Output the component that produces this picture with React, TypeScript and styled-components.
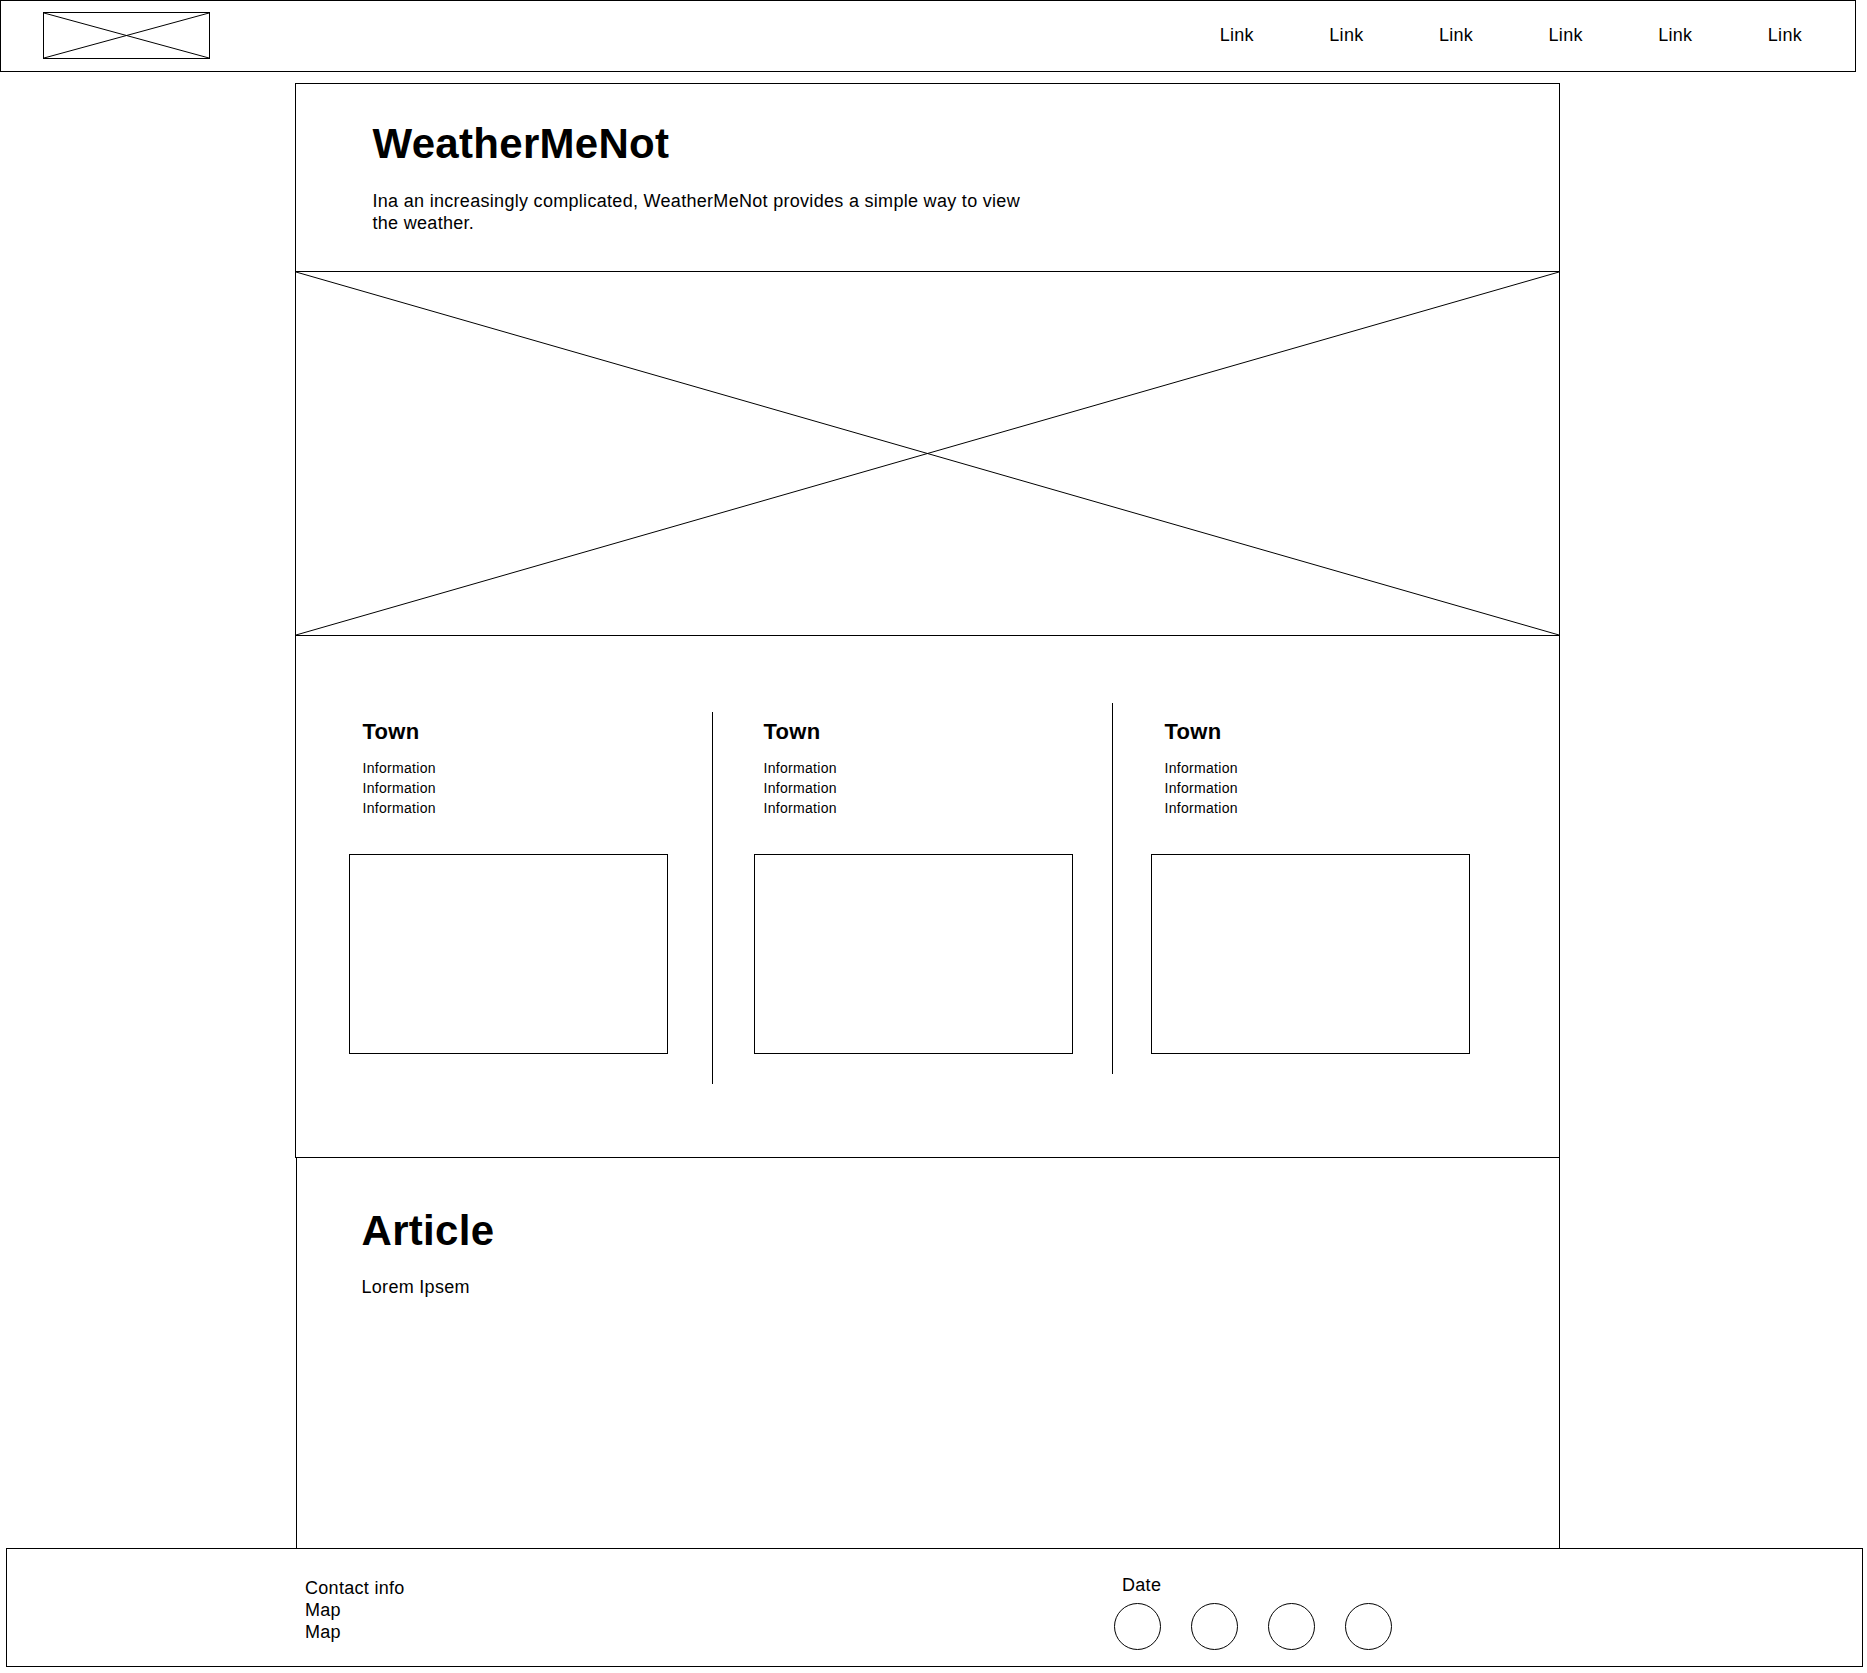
import React from "react";
import styled, { createGlobalStyle } from "styled-components";

const GlobalStyle = createGlobalStyle`
  html, body {
    margin: 0;
    padding: 0;
    background: #ffffff;
  }
  body {
    font-family: "Liberation Sans", Arial, Helvetica, sans-serif;
    color: #000000;
    letter-spacing: 0.3px;
  }
  *, *::before, *::after {
    box-sizing: border-box;
  }
`;

const Page = styled.div`
  width: 1867px;
  padding-bottom: 7px;
`;

const Header = styled.header`
  width: 1856px;
  height: 72px;
  border: 1px solid #000;
  display: flex;
  align-items: center;
  justify-content: space-between;
  padding: 0 53px 0 42px;
`;

const Placeholder = styled.div<{ $w: number; $h: number }>`
  width: ${(p) => p.$w}px;
  height: ${(p) => p.$h}px;
  margin-top: -1px;
  border: 1px solid #000;
  flex: none;
  svg {
    display: block;
    width: 100%;
    height: 100%;
  }
`;

const Nav = styled.nav`
  display: flex;
  gap: 75.4px;
  margin-top: -1px;
`;

const NavLink = styled.a`
  font-size: 18px;
  line-height: 21px;
  color: #000;
  text-decoration: none;
`;

const Column = styled.main`
  margin: 11px 0 0 295px;
  width: 1265px;
  display: flex;
  flex-direction: column;
`;

const Intro = styled.section`
  height: 189px;
  border: 1px solid #000;
  padding: 39.4px 0 0 76.5px;
`;

const Title = styled.h1`
  margin: 0;
  font-size: 42px;
  line-height: 42px;
  font-weight: 700;
`;

const Lead = styled.p`
  margin: 24.8px 0 0;
  max-width: 668px;
  font-size: 18px;
  line-height: 22px;
`;

const Banner = styled.section`
  height: 365px;
  margin-top: -1px;
  border: 1px solid #000;
  svg {
    display: block;
    width: 100%;
    height: 100%;
  }
`;

const Towns = styled.section`
  height: 523px;
  margin-top: -1px;
  border: 1px solid #000;
  display: flex;
  align-items: flex-start;
  padding-left: 53px;
`;

const TownCard = styled.div<{ $inset: number }>`
  width: 319px;
  flex: none;
  padding-top: 83px;
  display: flex;
  flex-direction: column;
  & > h2,
  & > ul {
    padding-left: ${(p) => p.$inset}px;
  }
`;

const TownName = styled.h2`
  margin: 0;
  font-size: 22px;
  line-height: 26px;
  font-weight: 700;
`;

const InfoList = styled.ul`
  margin: 13px 0 0;
  list-style: none;
  font-size: 14px;
  line-height: 20px;
`;

const TownMap = styled.div`
  margin-top: 36px;
  width: 319px;
  height: 200px;
  border: 1px solid #000;
`;

const Divider = styled.div<{ $top: number; $height: number; $before: number; $after: number }>`
  flex: none;
  width: 1px;
  background: #000;
  margin-top: ${(p) => p.$top}px;
  height: ${(p) => p.$height}px;
  margin-left: ${(p) => p.$before}px;
  margin-right: ${(p) => p.$after}px;
`;

const Article = styled.article`
  height: 391px;
  margin-top: -1px;
  margin-left: 1px;
  border: 1px solid #000;
  border-bottom: none;
  padding: 52.4px 0 0 64.5px;
`;

const ArticleTitle = styled.h2`
  margin: 0;
  font-size: 42px;
  line-height: 42px;
  font-weight: 700;
`;

const ArticleBody = styled.p`
  margin: 23.4px 0 0;
  font-size: 18px;
  line-height: 22px;
`;

const Footer = styled.footer`
  margin-left: 6px;
  width: 1857px;
  height: 119px;
  border: 1px solid #000;
  display: flex;
  align-items: flex-start;
  padding-left: 298px;
`;

const Contact = styled.div`
  width: 809px;
  flex: none;
  padding-top: 27.8px;
  font-size: 18px;
  line-height: 22px;
`;

const Social = styled.div`
  padding-top: 25.2px;
  display: flex;
  flex-direction: column;
`;

const DateLabel = styled.div`
  padding-left: 8px;
  font-size: 18px;
  line-height: 22px;
`;

const Circles = styled.div`
  margin-top: 6.8px;
  display: flex;
  gap: 30px;
`;

const Circle = styled.span`
  width: 47px;
  height: 47px;
  border: 1px solid #000;
  border-radius: 50%;
`;

const Cross = () => (
  <svg viewBox="0 0 100 100" preserveAspectRatio="none" aria-hidden="true">
    <line x1="0" y1="0" x2="100" y2="100" stroke="#000" strokeWidth="1" vectorEffect="non-scaling-stroke" />
    <line x1="100" y1="0" x2="0" y2="100" stroke="#000" strokeWidth="1" vectorEffect="non-scaling-stroke" />
  </svg>
);

const towns = [{ inset: 13.5 }, { inset: 9.5 }, { inset: 13.5 }];

const dividers = [
  { top: 76, height: 372, before: 44, after: 41 },
  { top: 67, height: 371, before: 39, after: 38 },
];

export default function App() {
  return (
    <Page>
      <GlobalStyle />
      <Header>
        <Placeholder $w={167} $h={47}>
          <Cross />
        </Placeholder>
        <Nav>
          {Array.from({ length: 6 }).map((_, i) => (
            <NavLink key={i} href="#">
              Link
            </NavLink>
          ))}
        </Nav>
      </Header>
      <Column>
        <Intro>
          <Title>WeatherMeNot</Title>
          <Lead>
            Ina an increasingly complicated, WeatherMeNot provides a simple way to view the weather.
          </Lead>
        </Intro>
        <Banner>
          <Cross />
        </Banner>
        <Towns>
          {towns.map((t, i) => (
            <React.Fragment key={i}>
              <TownCard $inset={t.inset}>
                <TownName>Town</TownName>
                <InfoList>
                  <li>Information</li>
                  <li>Information</li>
                  <li>Information</li>
                </InfoList>
                <TownMap />
              </TownCard>
              {i < dividers.length && (
                <Divider
                  $top={dividers[i].top}
                  $height={dividers[i].height}
                  $before={dividers[i].before}
                  $after={dividers[i].after}
                />
              )}
            </React.Fragment>
          ))}
        </Towns>
        <Article>
          <ArticleTitle>Article</ArticleTitle>
          <ArticleBody>Lorem Ipsem</ArticleBody>
        </Article>
      </Column>
      <Footer>
        <Contact>
          <div>Contact info</div>
          <div>Map</div>
          <div>Map</div>
        </Contact>
        <Social>
          <DateLabel>Date</DateLabel>
          <Circles>
            <Circle />
            <Circle />
            <Circle />
            <Circle />
          </Circles>
        </Social>
      </Footer>
    </Page>
  );
}
